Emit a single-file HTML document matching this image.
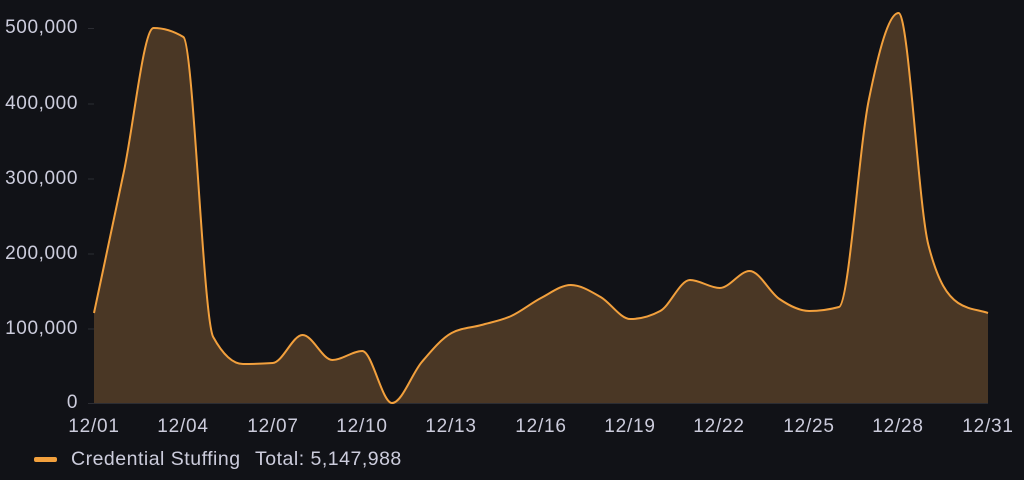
<!DOCTYPE html>
<html><head><meta charset="utf-8"><style>
html,body{margin:0;padding:0;background:#111217;}
body{width:1024px;height:480px;overflow:hidden;position:relative;font-family:"Liberation Sans",sans-serif;color:#ccccdc;}
.yl{position:absolute;right:946px;font-size:19px;letter-spacing:0.6px;line-height:20px;text-align:right;}
.xl{position:absolute;top:417px;font-size:19px;letter-spacing:0.8px;line-height:20px;width:90px;margin-left:-45px;text-align:center;}
.leg{position:absolute;top:449px;font-size:19.5px;letter-spacing:0.5px;line-height:20px;white-space:pre;}
.sw{position:absolute;left:34px;top:457px;width:23px;height:5px;border-radius:2px;background:#f2a03d;}
</style></head><body>
<svg id="s" width="1024" height="480" style="position:absolute;left:0;top:0">
<g stroke="#2c2d33" stroke-width="1">
<line x1="88" y1="28.5" x2="94" y2="28.5"/><line x1="88" y1="104" x2="94" y2="104"/><line x1="88" y1="179" x2="94" y2="179"/><line x1="88" y1="254" x2="94" y2="254"/><line x1="88" y1="329" x2="94" y2="329"/><line x1="88" y1="403.5" x2="94" y2="403.5"/>
<line x1="94" y1="403.5" x2="988" y2="403.5"/>
</g>
<path id="f" fill="#4a3725"/>
<path id="l" fill="none" stroke="#f2a03d" stroke-width="2"/>
</svg>
<div class="yl" style="top:18px">500,000</div>
<div class="yl" style="top:94px">400,000</div>
<div class="yl" style="top:169px">300,000</div>
<div class="yl" style="top:244px">200,000</div>
<div class="yl" style="top:319px">100,000</div>
<div class="yl" style="top:393px">0</div>
<div class="xl" style="left:94px">12/01</div>
<div class="xl" style="left:183px">12/04</div>
<div class="xl" style="left:273px">12/07</div>
<div class="xl" style="left:362px">12/10</div>
<div class="xl" style="left:451px">12/13</div>
<div class="xl" style="left:541px">12/16</div>
<div class="xl" style="left:630px">12/19</div>
<div class="xl" style="left:719px">12/22</div>
<div class="xl" style="left:809px">12/25</div>
<div class="xl" style="left:898px">12/28</div>
<div class="xl" style="left:988px">12/31</div>
<div class="sw"></div>
<div class="leg" style="left:71px">Credential Stuffing</div>
<div class="leg" style="left:255px">Total: 5,147,988</div>
<script>
var ys=[313,172,28,37,337,364,363,335,360,351,403,362,333,325,316,298,285,297,319,311,280,288,271,299,311,307,100,13,245,303,313];
var xs=ys.map(function(_,i){return 94+i*894/30;});
var n=ys.length,d=[],m=[];
for(var i=0;i<n-1;i++)d.push((ys[i+1]-ys[i])/(xs[i+1]-xs[i]));
m[0]=d[0];m[n-1]=d[n-2];
for(i=1;i<n-1;i++){if(d[i-1]*d[i]<=0)m[i]=0;else{var h0=xs[i]-xs[i-1],h1=xs[i+1]-xs[i];var p=(d[i-1]*h1+d[i]*h0)/(h0+h1);m[i]=(Math.sign(d[i-1])+Math.sign(d[i]))*Math.min(Math.abs(d[i-1]),Math.abs(d[i]),0.5*Math.abs(p));}}
var s="M"+xs[0]+","+ys[0];
for(i=0;i<n-1;i++){var h=(xs[i+1]-xs[i])/3;s+="C"+(xs[i]+h)+","+(ys[i]+m[i]*h)+" "+(xs[i+1]-h)+","+(ys[i+1]-m[i+1]*h)+" "+xs[i+1]+","+ys[i+1];}
document.getElementById('l').setAttribute('d',s);
document.getElementById('f').setAttribute('d',s+"L988,403L94,403Z");
</script>
</body></html>
